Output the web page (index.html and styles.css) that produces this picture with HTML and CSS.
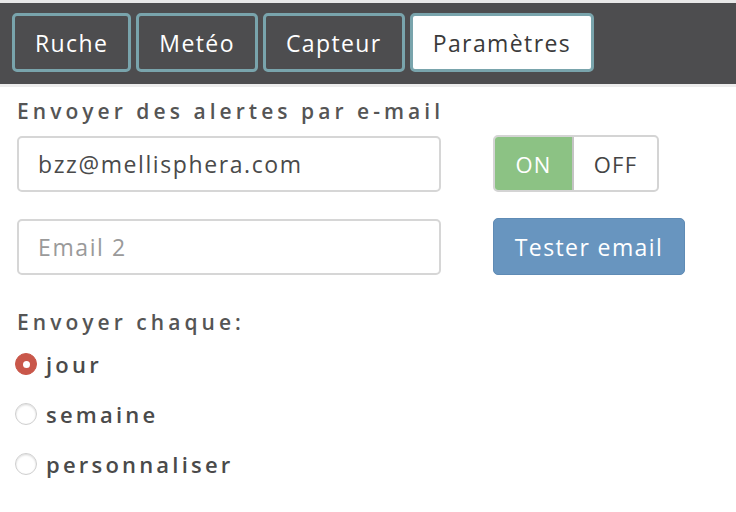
FILE: index.html
```html
<!DOCTYPE html>
<html lang="fr">
<head>
<meta charset="utf-8">
<link rel="stylesheet" href="styles.css">
</head>
<body>
<nav class="tabs">
  <button class="tab">Ruche</button>
  <button class="tab">Metéo</button>
  <button class="tab">Capteur</button>
  <button class="tab active">Paramètres</button>
</nav>
<main class="content">
  <h2 class="title">Envoyer des alertes par e-mail</h2>
  <div class="form-grid">
    <div class="field">bzz@mellisphera.com</div>
    <div class="toggle">
      <span class="seg on">ON</span>
      <span class="seg off">OFF</span>
    </div>
    <div class="field placeholder">Email 2</div>
    <button class="test-btn">Tester email</button>
  </div>
  <h2 class="title sub">Envoyer chaque:</h2>
  <ul class="radios">
    <li class="radio-row"><span class="radio checked"></span><span class="radio-label">jour</span></li>
    <li class="radio-row"><span class="radio"></span><span class="radio-label">semaine</span></li>
    <li class="radio-row"><span class="radio"></span><span class="radio-label">personnaliser</span></li>
  </ul>
</main>
</body>
</html>
```
FILE: styles.css
```css
* { box-sizing: border-box; }
body {
  margin: 0;
  background: #fff;
  font-family: "Open Sans", "DejaVu Sans", sans-serif;
  color: #4a4a4a;
}
.tabs {
  display: flex;
  gap: 5px;
  background: #4d4d4f;
  border-top: 3px solid #e8e8e8;
  border-bottom: 3px solid #ececec;
  padding: 10px 12px 12px;
}
.tab {
  height: 59px;
  padding: 0 20px;
  background: #4d4d4f;
  border: 3px solid #79a4ac;
  border-radius: 5px;
  color: #fff;
  font-family: inherit;
  font-size: 23px;
  letter-spacing: 1.4px;
}
.tab.active {
  background: #fff;
  color: #3a3a3a;
}
.content {
  padding: 0 17px;
}
.title {
  margin: 0;
  padding-top: 11px;
  font-size: 21px;
  font-weight: 600;
  letter-spacing: 4.05px;
  color: #555;
  line-height: 27px;
}
.form-grid {
  display: grid;
  grid-template-columns: 424px auto;
  column-gap: 52px;
  row-gap: 26px;
  justify-content: start;
  align-items: center;
  margin-top: 10px;
}
.field {
  height: 56px;
  border: 2px solid #d6d6d6;
  border-radius: 5px;
  padding: 0 19px;
  display: flex;
  align-items: center;
  font-size: 23px;
  color: #4a4a4a;
  letter-spacing: 1.6px;
}
.field.placeholder { color: #9a9a9a; }
.toggle {
  display: flex;
  width: 166px;
  height: 57px;
  border: 2px solid #d4d4d4;
  border-radius: 5px;
  overflow: hidden;
}
.seg {
  display: flex;
  align-items: center;
  justify-content: center;
  font-size: 22px;
  letter-spacing: 1.2px;
}
.seg.on {
  width: 79px;
  background: #8cc284;
  color: #fff;
  border-right: 2px solid #c4c4c4;
}
.seg.off {
  flex: 1;
  color: #444;
}
.test-btn {
  width: 192px;
  height: 57px;
  background: #6895bf;
  border: 1px solid #5f8bb5;
  border-radius: 5px;
  color: #fff;
  font-family: inherit;
  font-size: 23px;
  letter-spacing: 1.4px;
}
.title.sub {
  margin-top: 23px;
}
.radios {
  list-style: none;
  margin: 14px 0 0;
  padding: 0;
  display: flex;
  flex-direction: column;
  gap: 22px;
}
.radio-row {
  display: flex;
  align-items: center;
  gap: 9px;
  height: 28px;
  margin-left: -2px;
}
.radio {
  width: 22px;
  height: 22px;
  border-radius: 50%;
  border: 1px solid #cfcfcf;
  box-shadow: inset 0 1px 2px rgba(0,0,0,0.15);
  background: #fff;
  display: flex;
  align-items: center;
  justify-content: center;
}
.radio.checked {
  background: #c9574a;
  border-color: #c9574a;
  box-shadow: none;
}
.radio.checked::after {
  content: "";
  width: 7px;
  height: 7px;
  border-radius: 50%;
  background: #fff;
}
.radio-label {
  font-size: 22px;
  font-weight: 600;
  letter-spacing: 3.2px;
  color: #4a4a4a;
}
```
